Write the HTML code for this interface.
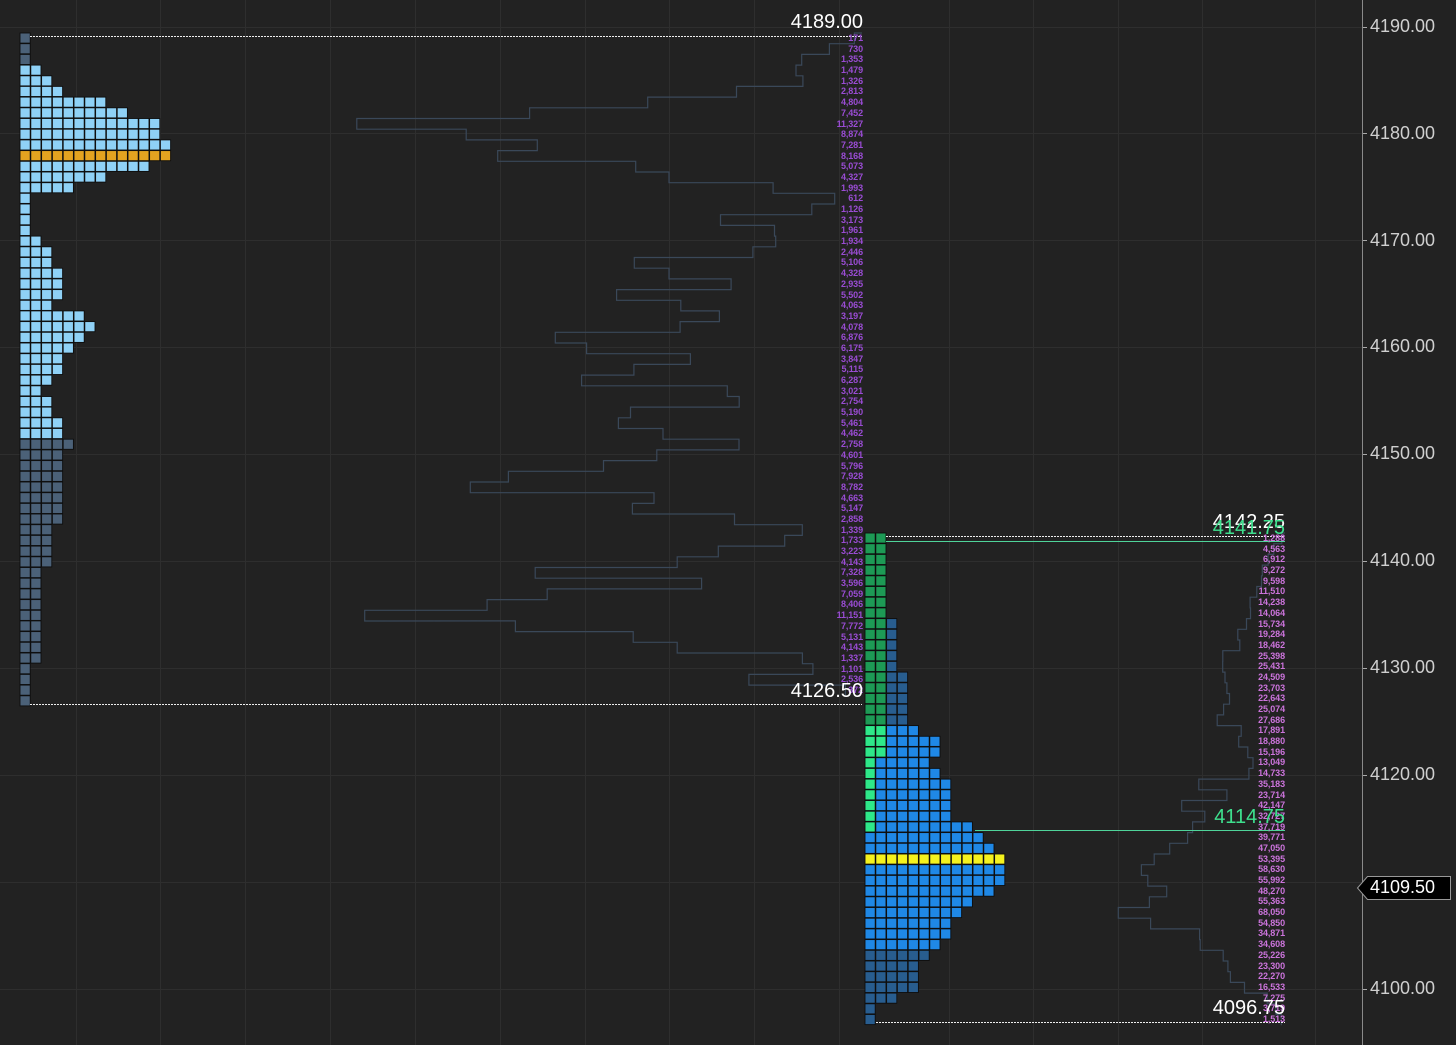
<!DOCTYPE html>
<html><head><meta charset="utf-8">
<style>
html,body{margin:0;padding:0;background:#222222;}
body{width:1456px;height:1045px;position:relative;overflow:hidden;font-family:"Liberation Sans",sans-serif;}
svg{position:absolute;left:0;top:0;}
.vol{position:absolute;text-align:right;font-weight:bold;font-size:9px;line-height:10.69px;letter-spacing:-0.1px;}
.vol div{height:10.69px;}
#lv{right:593px;top:33px;color:#9a4cd4;}
#rv{right:171px;top:533px;color:#cc74dc;}
#rv div{height:10.7px;line-height:10.7px;}
.lbl{position:absolute;font-size:20px;color:#fff;text-align:right;line-height:20px;}
.ax{position:absolute;left:1370px;font-size:18px;color:#cfcfcf;line-height:18px;}
</style></head><body>
<svg id="s" width="1456" height="1045" xmlns="http://www.w3.org/2000/svg"></svg>

<div class="vol" id="lv">
<div>171</div><div>730</div><div>1,353</div><div>1,479</div><div>1,326</div><div>2,813</div><div>4,804</div><div>7,452</div><div>11,327</div><div>8,874</div><div>7,281</div><div>8,168</div><div>5,073</div><div>4,327</div><div>1,993</div><div>612</div><div>1,126</div><div>3,173</div><div>1,961</div><div>1,934</div><div>2,446</div><div>5,106</div><div>4,328</div><div>2,935</div><div>5,502</div><div>4,063</div><div>3,197</div><div>4,078</div><div>6,876</div><div>6,175</div><div>3,847</div><div>5,115</div><div>6,287</div><div>3,021</div><div>2,754</div><div>5,190</div><div>5,461</div><div>4,462</div><div>2,758</div><div>4,601</div><div>5,796</div><div>7,928</div><div>8,782</div><div>4,663</div><div>5,147</div><div>2,858</div><div>1,339</div><div>1,733</div><div>3,223</div><div>4,143</div><div>7,328</div><div>3,596</div><div>7,059</div><div>8,406</div><div>11,151</div><div>7,772</div><div>5,131</div><div>4,143</div><div>1,337</div><div>1,101</div><div>2,536</div><div>372</div>
</div>

<div class="vol" id="rv">
<div>1,288</div><div>4,563</div><div>6,912</div><div>9,272</div><div>9,598</div><div>11,510</div><div>14,238</div><div>14,064</div><div>15,734</div><div>19,284</div><div>18,462</div><div>25,398</div><div>25,431</div><div>24,509</div><div>23,703</div><div>22,643</div><div>25,074</div><div>27,686</div><div>17,891</div><div>18,880</div><div>15,196</div><div>13,049</div><div>14,733</div><div>35,183</div><div>23,714</div><div>42,147</div><div>32,727</div><div>37,719</div><div>39,771</div><div>47,050</div><div>53,395</div><div>58,630</div><div>55,992</div><div>48,270</div><div>55,363</div><div>68,050</div><div>54,850</div><div>34,871</div><div>34,608</div><div>25,226</div><div>23,300</div><div>22,270</div><div>16,533</div><div>7,275</div><div>3,719</div><div>1,513</div>
</div>

<div class="lbl" style="right:593px;top:12px;">4189.00</div>
<div class="lbl" style="right:593px;top:681px;">4126.50</div>
<div class="lbl" style="right:171px;top:512px;">4142.25</div>
<div class="lbl" style="right:171px;top:518px;color:#3ee08e;">4141.75</div>
<div class="lbl" style="right:171px;top:807px;color:#3ee08e;">4114.75</div>
<div class="lbl" style="right:171px;top:998px;">4096.75</div>

<div class="ax" style="top:17px">4190.00</div>
<div class="ax" style="top:124px">4180.00</div>
<div class="ax" style="top:231px">4170.00</div>
<div class="ax" style="top:337px">4160.00</div>
<div class="ax" style="top:444px">4150.00</div>
<div class="ax" style="top:551px">4140.00</div>
<div class="ax" style="top:658px">4130.00</div>
<div class="ax" style="top:765px">4120.00</div>
<div class="ax" style="top:979px">4100.00</div>
<div class="ax" style="top:878px;color:#fff">4109.50</div>

<script>
(function(){
var s=document.getElementById('s'),h='';
[76,160,245,330,415,500,585,669,754,839,949,1033,1118,1202,1315].forEach(function(x){h+='<line x1="'+x+'.5" y1="0" x2="'+x+'.5" y2="1045" stroke="#2e2e2e"/>';});
[27,133,240,347,454,561,668,775,882,989].forEach(function(y){h+='<line x1="0" y1="'+y+'.5" x2="1362" y2="'+y+'.5" stroke="#2e2e2e"/>';h+='<line x1="1362" y1="'+y+'.5" x2="1367" y2="'+y+'.5" stroke="#aaa"/>';});
h+='<line x1="1362.5" y1="0" x2="1362.5" y2="1045" stroke="#8a8a8a"/>';
var lv=[171,730,1353,1479,1326,2813,4804,7452,11327,8874,7281,8168,5073,4327,1993,612,1126,3173,1961,1934,2446,5106,4328,2935,5502,4063,3197,4078,6876,6175,3847,5115,6287,3021,2754,5190,5461,4462,2758,4601,5796,7928,8782,4663,5147,2858,1339,1733,3223,4143,7328,3596,7059,8406,11151,7772,5131,4143,1337,1101,2536,372];
var p='M862,33';lv.forEach(function(v,i){var x=862-v*0.0446,y=33+i*10.69;p+=' L'+x.toFixed(1)+','+y.toFixed(1)+' L'+x.toFixed(1)+','+(y+10.69).toFixed(1);});
h+='<path d="'+p+'" fill="none" stroke="#3a4859" stroke-width="1.2"/>';
var rv=[1288,4563,6912,9272,9598,11510,14238,14064,15734,19284,18462,25398,25431,24509,23703,22643,25074,27686,17891,18880,15196,13049,14733,35183,23714,42147,32727,37719,39771,47050,53395,58630,55992,48270,55363,68050,54850,34871,34608,25226,23300,22270,16533,7275,3719,1513];
p='M1285,533';rv.forEach(function(v,i){var x=1285-v*0.00245,y=533+i*10.7;p+=' L'+x.toFixed(1)+','+y.toFixed(1)+' L'+x.toFixed(1)+','+(y+10.7).toFixed(1);});
h+='<path d="'+p+'" fill="none" stroke="#3a4859" stroke-width="1.2"/>';
var L='#8fd1f6',D='#4b6178',O='#e3a320';
var rows=[];function add(n,c,k){for(var i=0;i<k;i++)rows.push([n,c]);}
add(1,D,3);
[2,3,4,8,10,13,13,14].forEach(function(n){rows.push([n,L]);});
rows.push([14,O]);
[12,8,5,1,1,1,1,2,3,3,4,4,4,3,6,7,6,5,4,4,3,2,3,3,4,4].forEach(function(n){rows.push([n,L]);});
add(5,D,1);add(4,D,7);add(3,D,4);add(2,D,9);add(1,D,4);
rows.forEach(function(r,i){var y=33+i*10.69;for(var c=0;c<r[0];c++){h+='<rect x="'+(20+c*10.8).toFixed(1)+'" y="'+(y).toFixed(1)+'" width="10.2" height="10.1" fill="'+r[1]+'" stroke="#0e0e0e" stroke-width="0.9"/>';}});
var G='#1d9a55',LG='#2ee889',B='#1f88e6',DB='#285d8f',Y='#f4f21e';
var R=[];
for(var i=0;i<8;i++)R.push([G,G]);
for(i=0;i<5;i++)R.push([G,G,DB]);
for(i=0;i<5;i++)R.push([G,G,DB,DB]);
function mk(first,n,c){var a=first.slice();while(a.length<n)a.push(c||B);return a;}
R.push(mk([LG,LG],5));R.push(mk([LG,LG],7));R.push(mk([LG,LG],7));R.push(mk([LG],6));R.push(mk([LG],7));
for(i=0;i<4;i++)R.push(mk([LG],8));
R.push(mk([LG],10));R.push(mk([],11));R.push(mk([],12));R.push(mk([],13,Y));
[13,13,12,10,9,8,8,7].forEach(function(n){R.push(mk([],n));});
[6,5,5,5,3,1,1].forEach(function(n){R.push(mk([],n,DB));});
R.forEach(function(r,i){var y=533+i*10.7;r.forEach(function(c,j){h+='<rect x="'+(865+j*10.8).toFixed(1)+'" y="'+(y).toFixed(1)+'" width="10.2" height="10.1" fill="'+c+'" stroke="#0e0e0e" stroke-width="0.9"/>';});});
h+='<line x1="30" y1="36.5" x2="862" y2="36.5" stroke="#eee" stroke-dasharray="2,1"/>';
h+='<line x1="30" y1="704.5" x2="862" y2="704.5" stroke="#eee" stroke-dasharray="2,1"/>';
h+='<line x1="886" y1="536.5" x2="1285" y2="536.5" stroke="#eee" stroke-dasharray="2,1"/>';
h+='<line x1="886" y1="541.5" x2="1285" y2="541.5" stroke="#4fd49a"/>';
h+='<line x1="975" y1="830.5" x2="1285" y2="830.5" stroke="#4fd49a"/>';
h+='<line x1="876" y1="1022.5" x2="1285" y2="1022.5" stroke="#eee" stroke-dasharray="2,1"/>';
h+='<polygon points="1357.5,888 1367.5,876.5 1450.5,876.5 1450.5,899.5 1367.5,899.5" fill="#000" stroke="#999"/>';
s.innerHTML=h;
})();
</script>
</body></html>
